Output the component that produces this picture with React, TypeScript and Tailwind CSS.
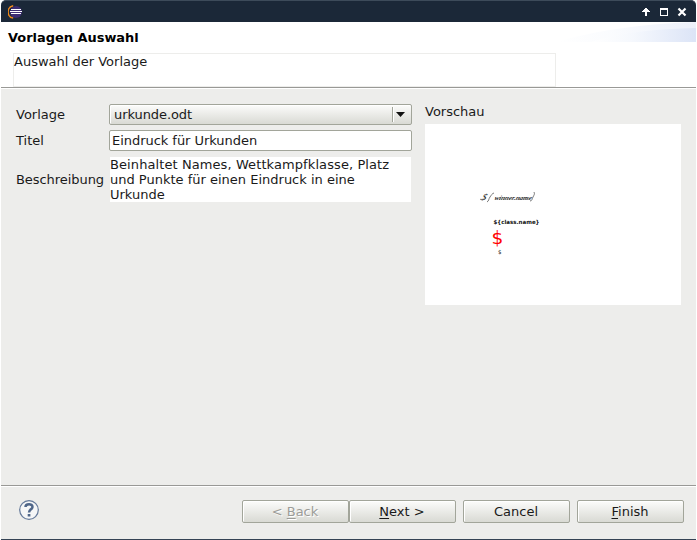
import type { ReactNode } from "react";

function TitleBar() {
  return (
    <header className="flex h-[22px] shrink-0 items-center justify-between rounded-t-[5px] border-t border-[#3d4b5a] bg-[#1b2838] pr-2 pl-[7px]">
      <svg width="15" height="14" viewBox="0 0 15 14" className="mt-px">
        <path d="M5.2 .8A6.2 6.2 0 0 0 5.2 13" fill="none" stroke="#f08a1c" strokeWidth="1.4" />
        <circle cx="8" cy="7" r="6" fill="#3c2c72" />
        <path d="M3 4h10v1H3zM2 6h12v1H2zM3 8h10v1H3z" fill="#fff" shapeRendering="crispEdges" />
      </svg>
      <svg width="48" height="14" viewBox="0 0 48 14" className="mt-px" shapeRendering="crispEdges">
        <path d="M5 3h2v1h1v1h1v1h1v1h-3v4h-2v-4h-3v-1h1v-1h1v-1h1z" fill="#fff" />
        <path d="M20 3h8v8h-8zM21 5v5h6v-5z" fill="#fff" fillRule="evenodd" />
        <path d="M38.5 3.5l7 7m0-7l-7 7" stroke="#fff" strokeWidth="2.2" shapeRendering="auto" />
      </svg>
    </header>
  );
}

function Button({ children, disabled = false, className = "" }: { children: ReactNode; disabled?: boolean; className?: string }) {
  return (
    <button
      disabled={disabled}
      className={`flex h-[23px] w-[107px] items-center justify-center rounded-[2px] border border-[#a2a59a] bg-linear-to-b from-[#fcfcfb] to-[#d9dad4] pr-px whitespace-pre shadow-[inset_1px_1px_0_#fff] ${
        disabled ? "text-[#9c9c98] [text-shadow:1px_1px_0_#fff]" : "text-[#1a1a1a]"
      } ${className}`}
    >
      <span>{children}</span>
    </button>
  );
}

function Mnemonic({ children }: { children: ReactNode }) {
  return <span className="underline decoration-1 underline-offset-2">{children}</span>;
}

function Preview() {
  return (
    <svg width="256" height="181" viewBox="0 0 256 181" className="mt-[5px] block bg-white">
      <g fill="#222" fontFamily="'Liberation Serif', serif" fontStyle="italic">
        <text transform="translate(56 76) skewX(-22)" fontSize="9">$</text>
        <path d="M55 75c1 1.500 4 1 6-1" fill="none" stroke="#555" strokeWidth=".7" />
        <path d="M62 78c2-1 1.500-3 3-5s2-3.500 4-4M105 77c2 0 2-2 3-4s2-3 1-5" fill="none" stroke="#444" strokeWidth=".7" />
        <text transform="translate(69 76) skewX(-22)" fontSize="6.500" fontWeight="700" textLength="37" lengthAdjust="spacingAndGlyphs">winner.name</text>
      </g>
      <text x="68.5" y="99.5" fontFamily="'DejaVu Sans', sans-serif" fontSize="5.6" fontWeight="700" fill="#111" textLength="46" lengthAdjust="spacingAndGlyphs">{"${class.name}"}</text>
      <text x="66.5" y="119.5" fontFamily="'DejaVu Sans', sans-serif" fontSize="18.5" fill="#f00">$</text>
      <text x="73" y="130" fontFamily="'DejaVu Sans', sans-serif" fontSize="5.5" fill="#222">$</text>
    </svg>
  );
}

export default function App() {
  return (
    <div className="h-[540px] w-[697px] overflow-hidden bg-white font-['DejaVu_Sans',sans-serif] text-[13px] leading-[15px] text-[#1a1a1a]">
      <div className="ml-px flex h-[540px] w-[695px] flex-col rounded-t-[5px] border-b border-[#354354] bg-[#ededeb]">
        <TitleBar />
        <section className="flex h-[66px] shrink-0 justify-between border-b border-[#999996] bg-white">
          <div className="flex flex-col">
            <h1 className="mt-2 ml-[7px] text-[12.95px] leading-4 font-bold text-black">Vorlagen Auswahl</h1>
            <div className="mt-[7px] ml-3 h-[34px] w-[543px] border border-[#ededeb] leading-4">Auswahl der Vorlage</div>
          </div>
          <svg width="140" height="20" viewBox="0 0 140 20">
            <defs>
              <linearGradient id="glow">
                <stop offset="0" stopColor="#fff" />
                <stop offset=".4" stopColor="#f5f8fd" />
                <stop offset="1" stopColor="#d9e2f6" />
              </linearGradient>
            </defs>
            <path d="M0 20C35 10 80 2 140 0V20z" fill="url(#glow)" opacity=".5" />
            <path d="M35 20C65 10 100 7 140 6V20z" fill="url(#glow)" opacity=".85" />
          </svg>
        </section>
        <main className="flex min-h-0 flex-1 border-t border-white pl-[15px]">
          <div className="mt-[15px] grid w-[396px] grid-cols-[93px_303px] grid-rows-[21px_21px_47px] items-center gap-y-[5px]">
            <label>Vorlage</label>
            <div className="flex h-[21px] items-center rounded-[2px] border border-[#a2a59a] bg-linear-to-b from-[#fcfcfb] to-[#d9dad4] pl-1 shadow-[inset_1px_1px_0_#fff]">
              <span className="flex-1 tracking-[-0.08px]">urkunde.odt</span>
              <span className="flex h-[15px] w-[19px] items-center border-l border-[#a2a59a] pl-[3px] shadow-[inset_1px_0_0_#fff]">
                <svg width="9" height="5" viewBox="0 0 9 5"><path d="M0 0h9L4.5 5z" fill="#111" /></svg>
              </span>
            </div>
            <label>Titel</label>
            <div className="h-[21px] rounded-[2px] border border-[#a2a59a] bg-white pl-0.5 leading-[19px] tracking-[-0.04px]">Eindruck für Urkunden</div>
            <label className="tracking-[-0.06px]">Beschreibung</label>
            <div className="mr-px ml-px h-[45px] bg-white">
              <span className="tracking-[0.09px]">Beinhaltet Names, Wettkampfklasse, Platz</span><br />und Punkte für einen Eindruck in eine<br />Urkunde
            </div>
          </div>
          <div className="mt-[15px] ml-[13px] w-[256px]">
            <h2>Vorschau</h2>
            <Preview />
          </div>
        </main>
        <footer className="flex h-[54px] shrink-0 justify-between border-t border-[#999996] pr-3 pl-[18px] shadow-[inset_0_1px_0_#fff]">
          <svg width="20" height="20" viewBox="0 0 20 20" className="mt-[14px]">
            <circle cx="10" cy="10" r="9.3" fill="#f5f6f7" stroke="#64799a" strokeWidth="1.2" />
            <path d="M6.5 7C6.5 3.3 13.5 3.2 13.5 7C13.5 9.3 10 9.3 10 12.5" fill="none" stroke="#4f6689" strokeWidth="2.5" />
            <path d="M8.7 14h2.7v2.5H8.7z" fill="#4f6689" />
          </svg>
          <div className="mt-[14px] flex">
            <Button disabled>{"< "}<Mnemonic>B</Mnemonic>ack</Button>
            <Button><Mnemonic>N</Mnemonic>{"ext >"}</Button>
            <Button className="ml-[7px]">Cancel</Button>
            <Button className="ml-[7px]"><Mnemonic>F</Mnemonic>inish</Button>
          </div>
        </footer>
      </div>
    </div>
  );
}
